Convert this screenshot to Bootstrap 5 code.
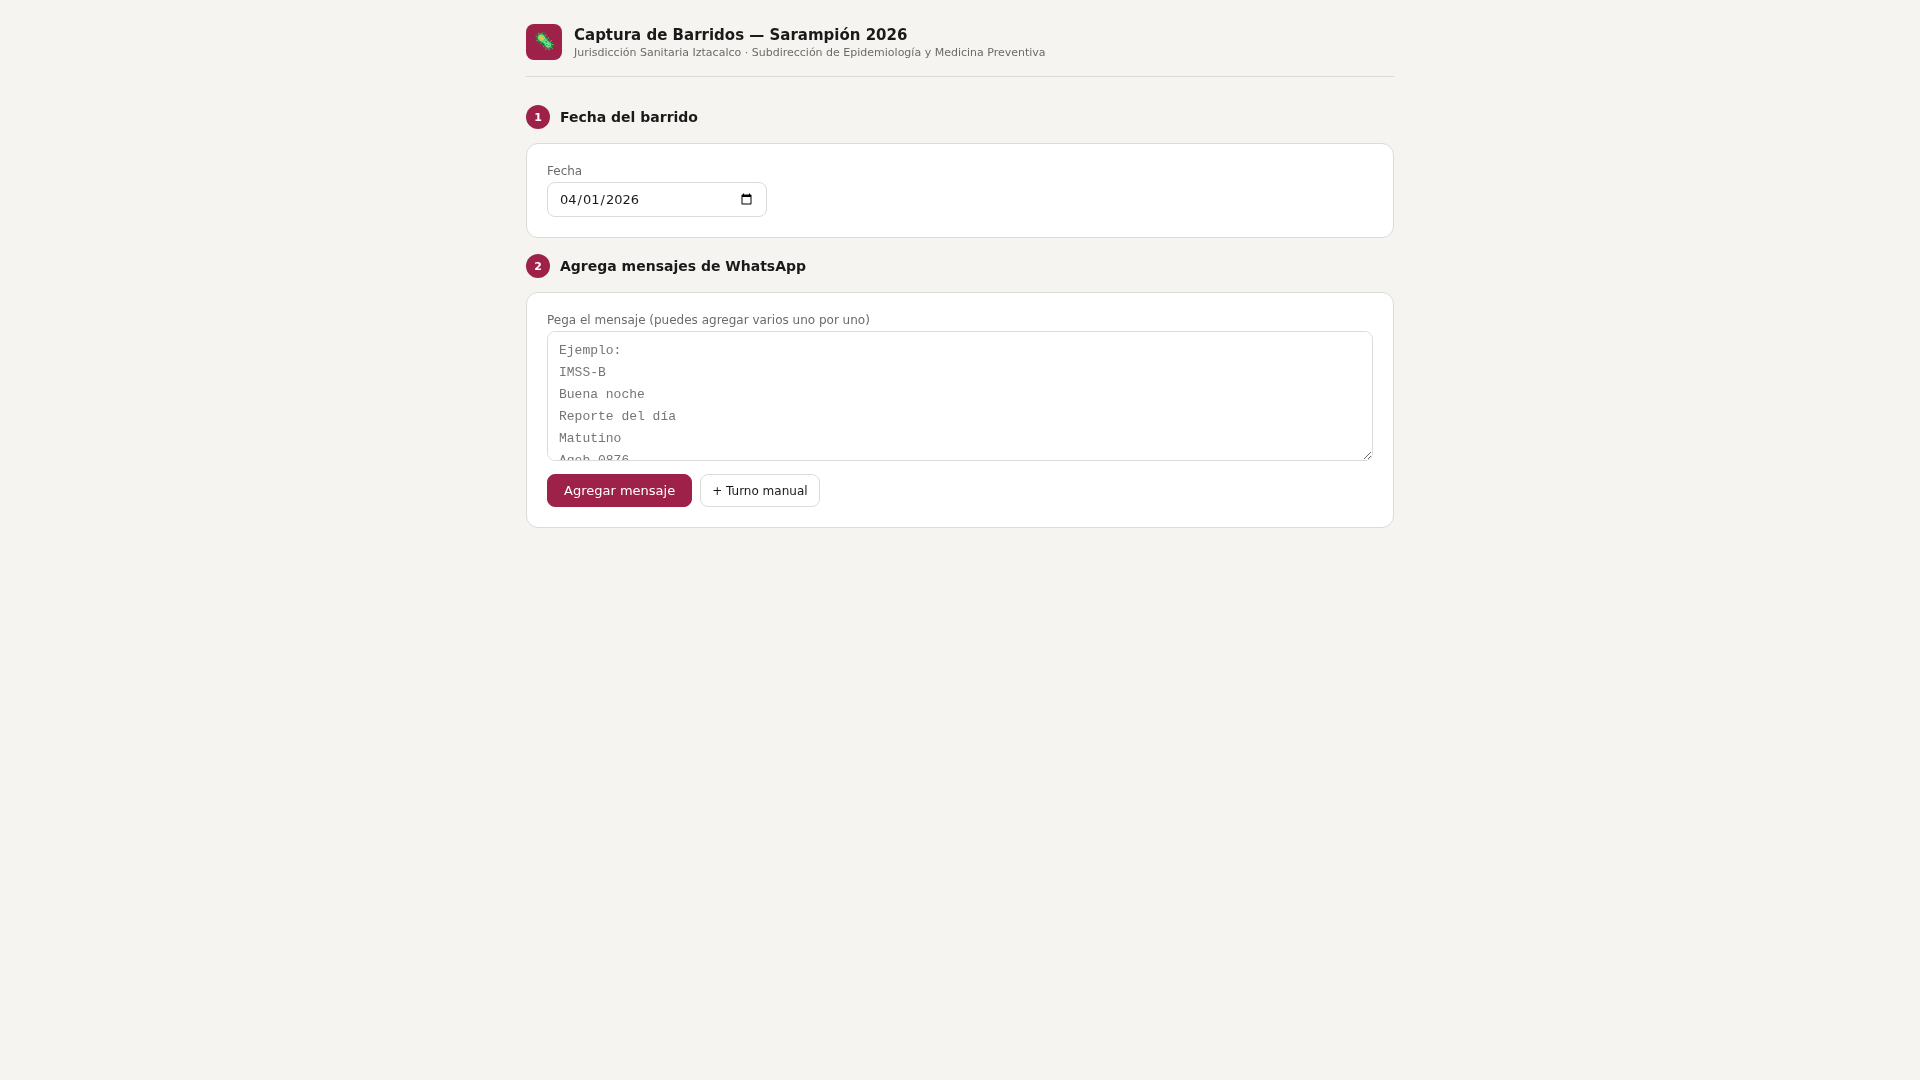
<!DOCTYPE html>
<html lang="es">
<head>
<meta charset="utf-8">
<meta name="viewport" content="width=device-width, initial-scale=1">
<title>Captura de Barridos — Sarampión 2026</title>
<link href="https://cdn.jsdelivr.net/npm/bootstrap@5.3.0/dist/css/bootstrap.min.css" rel="stylesheet">
<style>
  body { background: #f5f4f0; color: #1a1a1a; font-family: "DejaVu Sans", sans-serif; font-size: 14px; }
  .page { max-width: 900px; padding: 24px 16px; }
  .page-head { gap: 12px; padding-bottom: 16px; margin-bottom: 28px; border-bottom: 1px solid #dddbd5; }
  .logo { width: 36px; height: 36px; border-radius: 8px; background: #9d2148; font-size: 17px; }
  .page-title { font-size: 15px; line-height: 21px; }
  .page-sub { font-size: 11px; line-height: 14px; color: #6b6b6b; }
  .step-head { gap: 10px; margin-bottom: 14px; }
  .step-num { width: 24px; height: 24px; background: #9d2148; font-size: 11px; line-height: 17px; }
  .step-title { font-size: 14px; line-height: 18px; }
  .panel { border: 1px solid #dddbd5; border-radius: 12px; padding: 20px; margin-bottom: 16px; }
  .field-label { font-size: 12px; line-height: 14px; margin-bottom: 4px; color: #6b6b6b; }
  .field, .field:focus { border: 1px solid #dddbd5; border-radius: 8px; color: #1a1a1a; background: #fff; font-size: 13px; }
  .date-field { width: 220px; height: 35px; padding: 8px 11px; line-height: 17px; }
  .date-field::-webkit-datetime-edit-month-field,
  .date-field::-webkit-datetime-edit-day-field,
  .date-field::-webkit-datetime-edit-year-field { padding: 0 1px; }
  .message-field { height: 130px; padding: 8px 11px; line-height: 22px; font-family: "Liberation Mono", monospace; }
  .message-field::placeholder { color: #757575; }
  .actions { margin-top: 13px; }
  .action { height: 33px; border-radius: 8px; padding: 0 12px; font-size: 12px; line-height: 14px; --bs-btn-color: #1a1a1a; --bs-btn-bg: #fff; --bs-btn-border-color: #dddbd5; --bs-btn-hover-bg: #f5f4f0; --bs-btn-hover-border-color: #dddbd5; }
  .action-side { padding: 0 11px; }
  .action-main { padding: 0 16px; font-size: 13px; line-height: 15px; --bs-btn-color: #fff; --bs-btn-bg: #9d2148; --bs-btn-border-color: #9d2148; --bs-btn-hover-color: #fff; --bs-btn-hover-bg: #7f1b3a; --bs-btn-hover-border-color: #7f1b3a; }
</style>
</head>
<body>
<div class="container-fluid page">
  <header class="page-head d-flex align-items-center">
    <div class="logo d-flex align-items-center justify-content-center" aria-hidden="true">🦠</div>
    <div>
      <h1 class="page-title fw-bold mb-0">Captura de Barridos — Sarampión 2026</h1>
      <p class="page-sub mb-0">Jurisdicción Sanitaria Iztacalco · Subdirección de Epidemiología y Medicina Preventiva</p>
    </div>
  </header>
  <main>
    <section>
      <div class="step-head d-flex align-items-center">
        <span class="step-num rounded-circle text-white fw-bold d-flex align-items-center justify-content-center">1</span>
        <h2 class="step-title fw-bold mb-0">Fecha del barrido</h2>
      </div>
      <div class="panel bg-white">
        <label class="field-label d-block" for="fecha">Fecha</label>
        <input class="form-control field date-field" type="date" id="fecha" value="2026-04-01">
      </div>
    </section>
    <section>
      <div class="step-head d-flex align-items-center">
        <span class="step-num rounded-circle text-white fw-bold d-flex align-items-center justify-content-center">2</span>
        <h2 class="step-title fw-bold mb-0">Agrega mensajes de WhatsApp</h2>
      </div>
      <div class="panel bg-white">
        <label class="field-label d-block" for="mensaje">Pega el mensaje (puedes agregar varios uno por uno)</label>
        <textarea class="form-control field message-field" id="mensaje" placeholder="Ejemplo:&#10;IMSS-B&#10;Buena noche&#10;Reporte del día&#10;Matutino&#10;Ageb 0876"></textarea>
        <div class="actions d-flex flex-wrap gap-2">
          <button type="button" class="btn action action-main">Agregar mensaje</button>
          <button type="button" class="btn action action-side">+ Turno manual</button>
        </div>
      </div>
    </section>
  </main>
</div>
<script src="https://cdn.jsdelivr.net/npm/bootstrap@5.3.0/dist/js/bootstrap.bundle.min.js"></script>
</body>
</html>
